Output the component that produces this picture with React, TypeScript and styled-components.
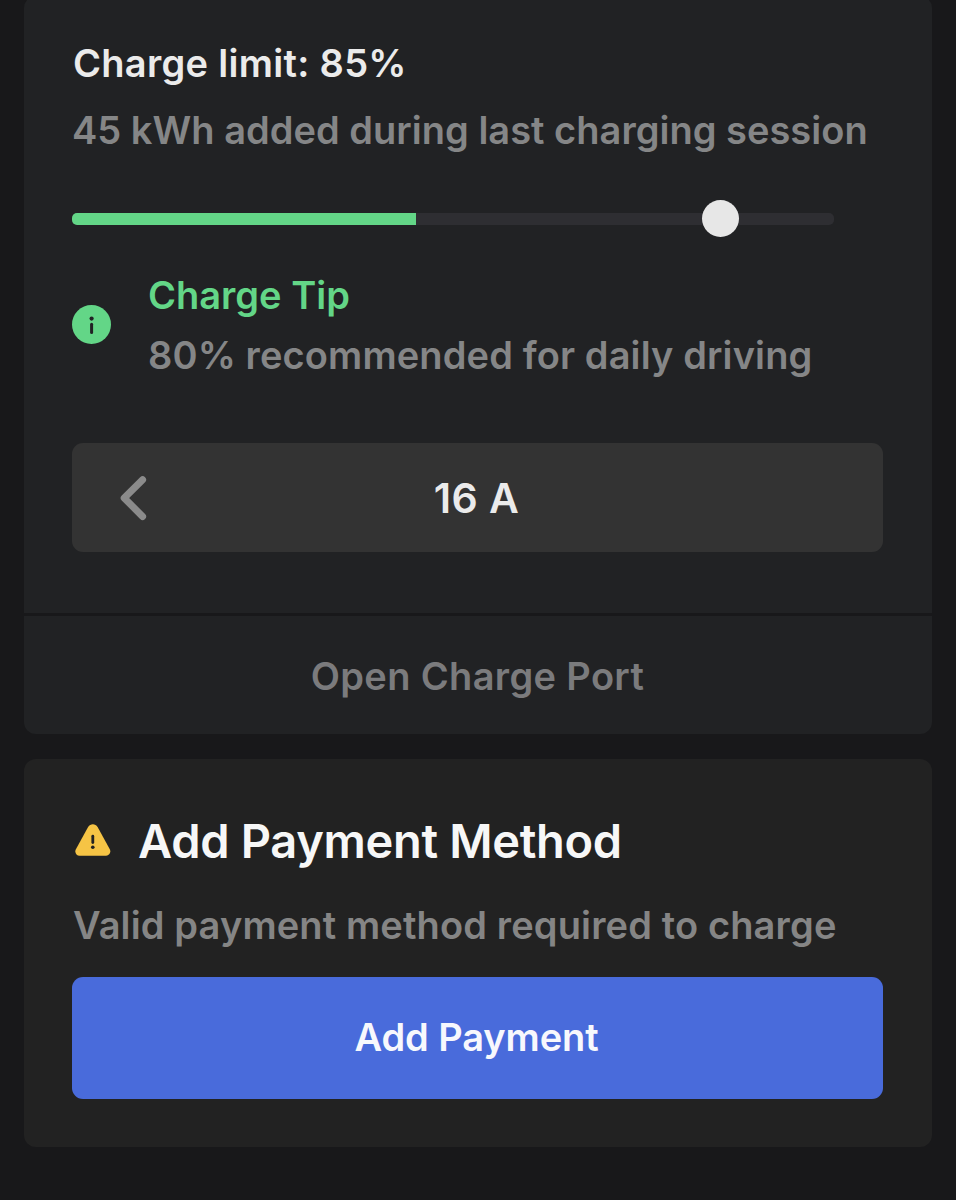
import React from "react";
import styled, { createGlobalStyle } from "styled-components";

const GlobalStyle = createGlobalStyle`
  * { box-sizing: border-box; }
  body {
    margin: 0;
    background: #18181a;
    font-family: Inter, "Liberation Sans", sans-serif;
    overflow: hidden;
  }
`;

const Screen = styled.main`
  display: flex;
  flex-direction: column;
  gap: 24.5px;
  width: 956px;
  height: 1200px;
  padding: 0 24.5px 0 23.5px;
  overflow: hidden;
`;

const Card = styled.section`
  display: flex;
  flex-direction: column;
  flex: none;
  border-radius: 12px;
  overflow: hidden;
`;

const ChargeCard = styled(Card)`
  gap: 3px;
  margin-top: -4px;
`;

const ChargeBody = styled.div`
  display: flex;
  flex-direction: column;
  height: 617px;
  padding: 37px 48.5px 0;
  background: #212224;
`;

const PaymentCard = styled(Card)`
  height: 388px;
  padding: 47px 48.5px 0;
  background: #222222;
`;

const Text = styled.p<{ $color: string; $spacing: number; $size?: number }>`
  margin: 0;
  font-size: ${(p) => p.$size ?? 38}px;
  font-weight: 600;
  line-height: 60px;
  letter-spacing: ${(p) => p.$spacing}px;
  color: ${(p) => p.$color};
  white-space: nowrap;
`;

const LimitTitle = styled(Text)`
  padding-left: 1px;
`;

const SessionNote = styled(Text)`
  margin-top: 7px;
`;

const PaymentNote = styled(Text)`
  margin-top: 19px;
  padding-left: 1px;
`;

const Slider = styled.div`
  position: relative;
  display: flex;
  align-items: center;
  width: 762px;
  height: 37px;
  margin: 40px 0 28px;
`;

const Track = styled.div`
  width: 100%;
  height: 12px;
  border-radius: 5px;
  overflow: hidden;
  background: #2e2e32;
`;

const Fill = styled.div`
  width: 45.1%;
  height: 100%;
  background: #63d687;
`;

const Thumb = styled.div`
  position: absolute;
  left: 85%;
  width: 37px;
  height: 37px;
  margin-left: -18px;
  border-radius: 50%;
  background: #e7e7e7;
`;

const Tip = styled.div`
  display: flex;
  align-items: center;
  gap: 37px;

  svg {
    margin-top: -1px;
  }
`;

const TipText = styled.div`
  display: flex;
  flex-direction: column;
`;

const Stepper = styled.div`
  display: grid;
  grid-template-columns: 124px 1fr 124px;
  align-items: center;
  height: 109px;
  margin-top: 58px;
  border-radius: 11px;
  background: #333333;
`;

const StepButton = styled.button`
  display: flex;
  align-items: center;
  justify-content: center;
  height: 100%;
  padding: 0 2px 0 0;
  border: 0;
  background: none;
`;

const Amps = styled(Text)`
  padding-right: 2px;
  text-align: center;
`;

const PortButton = styled.button`
  display: flex;
  align-items: center;
  justify-content: center;
  height: 118px;
  padding: 1px 0 0;
  border: 0;
  background: #212224;
  font-family: inherit;
`;

const PaymentHeader = styled.div`
  display: flex;
  align-items: center;
  gap: 27px;
  height: 70px;
  padding-left: 3px;

  svg {
    margin-top: -2px;
  }
`;

const PayButton = styled.button`
  display: flex;
  align-items: center;
  justify-content: center;
  flex: none;
  height: 121.5px;
  margin-top: 22.5px;
  padding: 0 2px 2px 0;
  border: 0;
  border-radius: 11px;
  background: #496bdb;
  font-family: inherit;
`;

const InfoIcon = () => (
  <svg width="39" height="39" viewBox="0 0 39 39" fill="none">
    <circle cx="19.5" cy="19.5" r="19.5" fill="#63d687" />
    <circle cx="19.6" cy="13.6" r="2.1" fill="#212224" />
    <path d="M19.6 19.2V27.5" stroke="#212224" strokeWidth="3" strokeLinecap="round" />
  </svg>
);

const WarningIcon = () => (
  <svg width="36" height="32" viewBox="0 0 36 32" fill="none">
    <path
      d="M13.1 2.9C15.3-.8 20.4-.8 22.6 2.9L34.8 25.2C36.2 28 34.5 31.7 31.1 31.7H4.6C1.2 31.7-.7 28.2.9 25.2Z"
      fill="#f6c445"
    />
    <path d="M17.8 12.2V18.6" stroke="#222222" strokeWidth="2.8" strokeLinecap="round" />
    <circle cx="17.8" cy="23.3" r="1.8" fill="#222222" />
  </svg>
);

const ChevronLeft = () => (
  <svg width="28" height="46" viewBox="0 0 28 46" fill="none">
    <path
      d="M23.6 4.7L5.2 23L23.6 41.5"
      stroke="#8b8b8b"
      strokeWidth="7"
      strokeLinecap="round"
      strokeLinejoin="round"
    />
  </svg>
);

export default function App() {
  return (
    <>
      <GlobalStyle />
      <Screen>
        <ChargeCard>
          <ChargeBody>
            <LimitTitle $color="#ebebeb" $spacing={0.3}>Charge limit: 85%</LimitTitle>
            <SessionNote $color="#858687" $spacing={0.02}>
              45 kWh added during last charging session
            </SessionNote>
            <Slider>
              <Track>
                <Fill />
              </Track>
              <Thumb />
            </Slider>
            <Tip>
              <InfoIcon />
              <TipText>
                <Text $color="#63d687" $spacing={0}>Charge Tip</Text>
                <Text $color="#858687" $spacing={0.12}>80% recommended for daily driving</Text>
              </TipText>
            </Tip>
            <Stepper>
              <StepButton aria-label="Decrease">
                <ChevronLeft />
              </StepButton>
              <Amps $color="#ebebeb" $spacing={0.4} $size={41}>16 A</Amps>
            </Stepper>
          </ChargeBody>
          <PortButton>
            <Text as="span" $color="#7b7b7d" $spacing={0.35}>Open Charge Port</Text>
          </PortButton>
        </ChargeCard>
        <PaymentCard>
          <PaymentHeader>
            <WarningIcon />
            <Text as="h2" $color="#f7f7f7" $spacing={-0.32} $size={47}>Add Payment Method</Text>
          </PaymentHeader>
          <PaymentNote $color="#858585" $spacing={0.14}>Valid payment method required to charge</PaymentNote>
          <PayButton>
            <Text as="span" $color="#f7f8fd" $spacing={-0.1}>Add Payment</Text>
          </PayButton>
        </PaymentCard>
      </Screen>
    </>
  );
}
